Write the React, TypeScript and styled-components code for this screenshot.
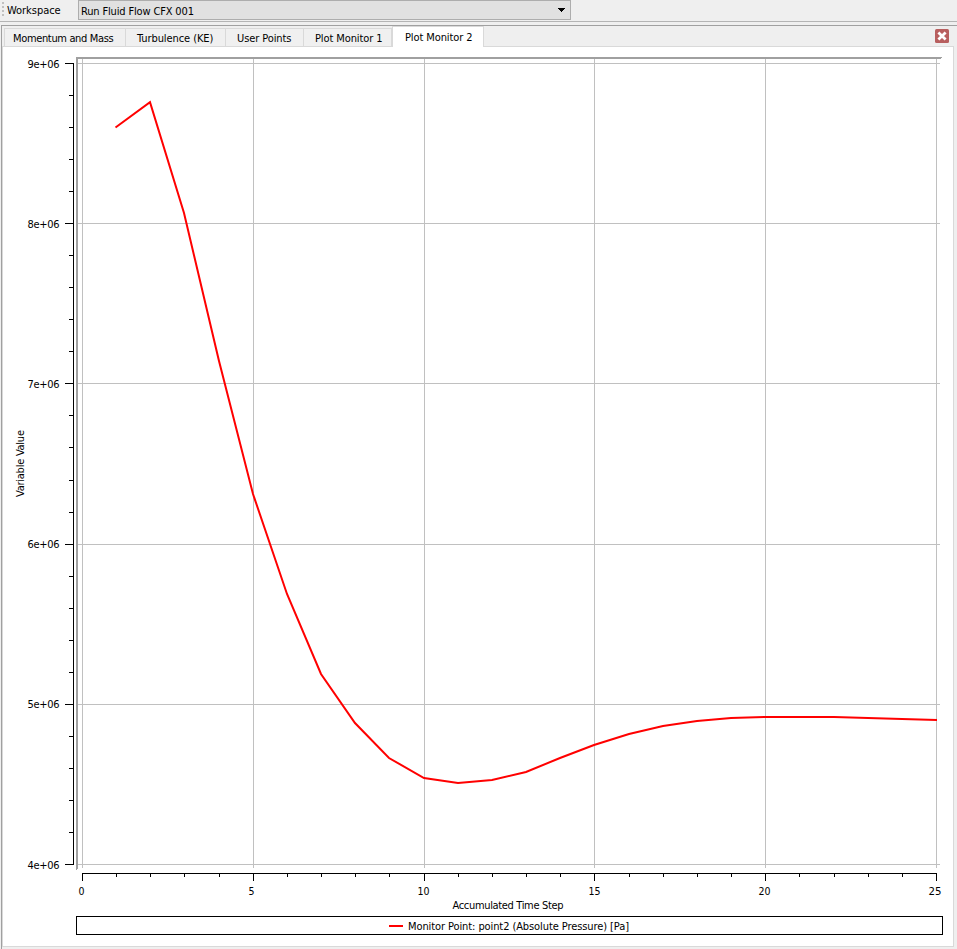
import React from 'react';
import styled, { createGlobalStyle } from 'styled-components';

const Global = createGlobalStyle`
  * { box-sizing: border-box; }
  body { margin: 0; background: #efefef; overflow: hidden; }
`;

const Window = styled.div`
  width: 957px;
  height: 949px;
  display: flex;
  flex-direction: column;
  background: #efefef;
  color: #000;
  font: 11px/14px 'DejaVu Sans Condensed', 'DejaVu Sans', sans-serif;
  font-stretch: condensed;
`;

const Toolbar = styled.header`
  height: 22px;
  flex: none;
  display: flex;
  align-items: flex-start;
  border-bottom: 1px solid #b4b4b4;
`;

const Grip = styled.svg`
  width: 7px;
  height: 20px;
  flex: none;
`;

const ToolbarLabel = styled.label`
  width: 71px;
  padding-top: 4px;
`;

const Label = styled.span<{ $spacing?: number }>`
  white-space: nowrap;
  letter-spacing: ${(p) => p.$spacing ?? 0}px;
`;

const Select = styled.button`
  width: 493px;
  height: 20px;
  padding: 3px 5px 0 2px;
  display: flex;
  align-items: center;
  justify-content: space-between;
  border: 1px solid #adadad;
  border-radius: 0;
  background: #e1e1e1;
  color: inherit;
  font: inherit;
  font-stretch: inherit;
`;

const Arrow = styled.svg`
  width: 7px;
  height: 4px;
  margin-bottom: 3px;
`;

const Workspace = styled.main`
  flex: 1;
  min-height: 0;
  margin: 3px 0 0 1px;
  border-top: 1px solid #a0a0a0;
  border-left: 1px solid #a0a0a0;
  padding: 0 3px 2px 0;
  display: flex;
  flex-direction: column;
`;

const TabBar = styled.nav`
  height: 20px;
  flex: none;
  display: flex;
  align-items: flex-end;
  padding-left: 2px;
`;

const Tab = styled.button<{ $width: number; $indent: number; $active?: boolean; $first?: boolean }>`
  flex: none;
  width: ${(p) => p.$width}px;
  height: ${(p) => (p.$active ? 21 : 18)}px;
  margin-bottom: ${(p) => (p.$active ? -1 : 0)}px;
  z-index: ${(p) => (p.$active ? 1 : 0)};
  padding: ${(p) => (p.$active ? 1 : 2)}px 0 0 ${(p) => p.$indent}px;
  border: 0 solid #d9d9d9;
  border-top-width: 1px;
  border-right-width: 1px;
  border-left-width: ${(p) => (p.$first || p.$active ? 1 : 0)}px;
  background: ${(p) => (p.$active ? '#fff' : '#f0f0f0')};
  color: inherit;
  font: inherit;
  font-stretch: inherit;
  text-align: left;
`;

const CloseButton = styled.button`
  width: 14px;
  height: 14px;
  margin: 0 5px 3px auto;
  padding: 0;
  border: 0;
  background: none;
  display: flex;
`;

const Pane = styled.section`
  flex: 1;
  min-height: 0;
  border: 1px solid #d9d9d9;
  background: #fff;
`;

const Plot = styled.svg`
  display: block;
  width: 950px;
  height: 899px;
  font: 11px 'DejaVu Sans Condensed', 'DejaVu Sans', sans-serif;
  font-stretch: condensed;
`;

const tabs = [
  { name: 'Momentum and Mass', width: 122, indent: 8, spacing: -0.35 },
  { name: 'Turbulence (KE)', width: 100, indent: 11, spacing: -0.08 },
  { name: 'User Points', width: 78, indent: 11, spacing: -0.1 },
  { name: 'Plot Monitor 1', width: 88, indent: 11, spacing: -0.1 },
  { name: 'Plot Monitor 2', width: 92, indent: 12, spacing: -0.1, active: true },
];

const gridX = [82, 253, 424, 594, 765, 936];
const gridY = [63, 223, 383, 544, 704, 864];
const yLabels = [
  { text: '9e+06', y: 68 },
  { text: '8e+06', y: 228 },
  { text: '7e+06', y: 388 },
  { text: '6e+06', y: 548 },
  { text: '5e+06', y: 708 },
  { text: '4e+06', y: 869 },
];
const xLabels = [
  { text: '0', x: 79, w: 5 },
  { text: '5', x: 249, w: 5 },
  { text: '10', x: 418, w: 11 },
  { text: '15', x: 589, w: 11 },
  { text: '20', x: 759, w: 11 },
  { text: '25', x: 929, w: 12 },
];

const series = [
  [115.5, 127.5], [150, 102.2], [184, 213], [219, 361], [253, 494], [287, 594],
  [321, 674], [355, 723], [389, 758], [424, 778], [458, 783], [492, 780],
  [526, 772], [560, 758], [594, 745], [629, 734], [663, 726], [697, 721],
  [731, 718], [765, 717], [799, 717], [834, 717], [868, 718], [902, 719],
  [937, 720],
];

const minorTicks = Array.from({ length: 26 }, (_, i) => i).filter((i) => i % 5);

const Chart = () => (
  <Plot viewBox="3 47 950 899">
    <g fill="#c0c0c0" shapeRendering="crispEdges">
      {gridX.map((x) => <rect key={x} x={x} y={59} width={1} height={809} />)}
      {gridY.map((y) => <rect key={y} x={78} y={y} width={862} height={1} />)}
    </g>
    <path d="M76 57H942V58H941V59H78V869H77V870H76Z" fill="#a0a0a0" shapeRendering="crispEdges" />
    <g shapeRendering="crispEdges">
      <rect x={73} y={63} width={1} height={802} />
      <rect x={82} y={873} width={855} height={1} />
      {gridY.map((y) => <rect key={y} x={65} y={y} width={9} height={1} />)}
      {gridX.map((x) => <rect key={x} x={x} y={873} width={1} height={8} />)}
      {minorTicks.map((i) => <rect key={i} x={69} y={Math.round(63 + i * 32.04)} width={4} height={1} />)}
      {minorTicks.map((i) => <rect key={i} x={Math.round(82 + i * 34.16)} y={873} width={1} height={4} />)}
    </g>
    <polyline points={series.map((p) => p.join(',')).join(' ')} fill="none" stroke="#f00" strokeWidth={2} />
    {yLabels.map((l) => (
      <text key={l.text} x={27.5} y={l.y} textLength={32} lengthAdjust="spacing">{l.text}</text>
    ))}
    {xLabels.map((l) => (
      <text key={l.text} x={l.x - 0.5} y={895} textLength={l.w + 1} lengthAdjust="spacingAndGlyphs">{l.text}</text>
    ))}
    <text transform="translate(24 497) rotate(-90)" textLength={67}>Variable Value</text>
    <text x={452.5} y={909} textLength={111}>Accumulated Time Step</text>
    <rect x={76.5} y={916.5} width={866} height={18} fill="none" stroke="#000" />
    <rect x={389} y={925} width={14} height={2} fill="#f00" />
    <text x={408} y={930} textLength={221}>Monitor Point: point2 (Absolute Pressure) [Pa]</text>
  </Plot>
);

export default function App() {
  return (
    <Window>
      <Global />
      <Toolbar>
        <Grip viewBox="0 0 7 20">
          {[2, 6, 10, 14].map((y) => (
            <rect key={y} x={2} y={y} width={2} height={2} fill="#c0c0c0" />
          ))}
        </Grip>
        <ToolbarLabel><Label $spacing={-0.05}>Workspace</Label></ToolbarLabel>
        <Select>
          <Label $spacing={-0.15}>Run Fluid Flow CFX 001</Label>
          <Arrow viewBox="0 0 7 4" shapeRendering="crispEdges">
            <path d="M0 0H7V1H6V2H5V3H4V4H3V3H2V2H1V1H0Z" />
          </Arrow>
        </Select>
      </Toolbar>
      <Workspace>
        <TabBar>
          {tabs.map((t, i) => (
            <Tab key={t.name} $width={t.width} $indent={t.indent} $active={t.active} $first={i === 0}>
              <Label $spacing={t.spacing}>{t.name}</Label>
            </Tab>
          ))}
          <CloseButton aria-label="Close">
            <svg width="14" height="14" viewBox="0 0 14 14">
              <rect width="14" height="14" rx="1.5" fill="#b85f5f" />
              <path d="M3.4 3.6L10.6 10.4M10.6 3.6L3.4 10.4" stroke="#fff" strokeWidth="2.8" />
            </svg>
          </CloseButton>
        </TabBar>
        <Pane><Chart /></Pane>
      </Workspace>
    </Window>
  );
}
